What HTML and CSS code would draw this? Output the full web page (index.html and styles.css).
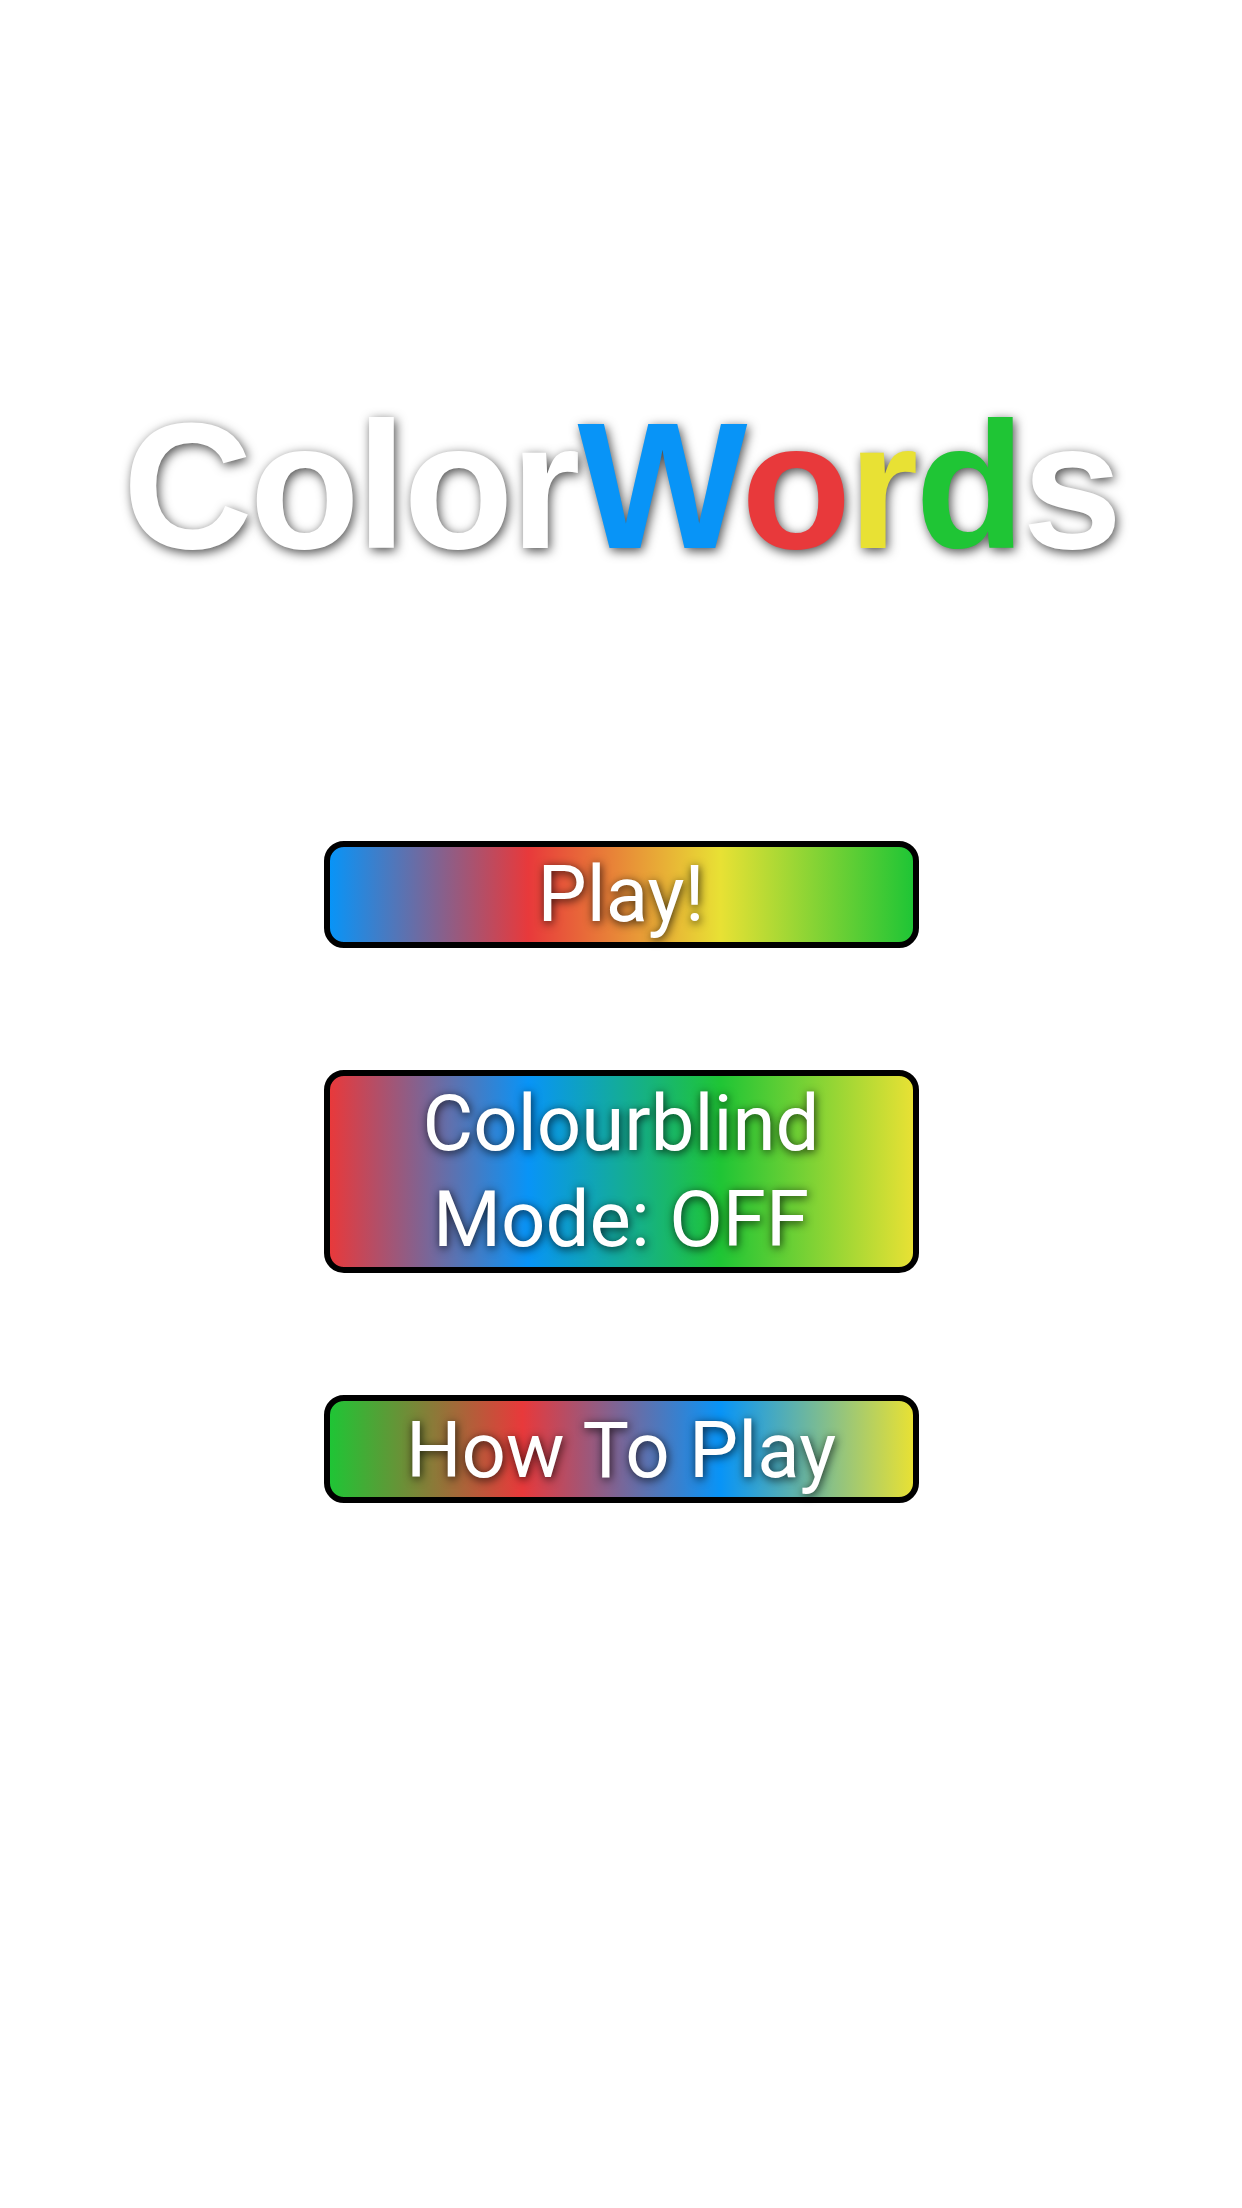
FILE: index.html
```html
<!DOCTYPE html>
<html>
<head>
<meta charset="utf-8">
<link rel="stylesheet" href="styles.css">
</head>
<body>
<main class="screen">
  <h1 class="title"><span class="w">Color</span><span class="c-blue">W</span><span class="c-red">o</span><span class="c-yellow">r</span><span class="c-green">d</span><span class="w">s</span></h1>
  <div class="menu">
    <button class="btn btn-play">Play!</button>
    <button class="btn btn-cb">Colourblind<br>Mode: OFF</button>
    <button class="btn btn-how">How To Play</button>
  </div>
</main>
</body>
</html>
```

FILE: styles.css
```css
html, body {
  margin: 0;
  padding: 0;
  background: #ffffff;
}

.screen {
  width: 1242px;
  height: 2208px;
  display: flex;
  flex-direction: column;
  align-items: center;
}

.title {
  margin: 396px 0 0 0;
  height: 180px;
  font-family: "Liberation Sans", Arial, sans-serif;
  font-weight: 700;
  font-size: 180px;
  line-height: 180px;
  letter-spacing: -3px;
  color: #ffffff;
  text-shadow: 2px 3px 11px rgba(0, 0, 0, 0.7);
  white-space: nowrap;
}

.c-blue { color: #0894f7; }
.c-red { color: #e8393b; }
.c-yellow { color: #e8e134; }
.c-green { color: #1fc535; }

.menu {
  margin-top: 265px;
  display: flex;
  flex-direction: column;
  align-items: center;
  gap: 122px;
}

.btn {
  box-sizing: border-box;
  width: 595px;
  margin: 0;
  padding: 0;
  border: 6px solid #000000;
  border-radius: 20px;
  font-family: Roboto, "Noto Sans", sans-serif;
  font-weight: 400;
  font-size: 78px;
  line-height: 96px;
  color: #ffffff;
  text-align: center;
  text-shadow: 1px 2px 10px rgba(0, 0, 0, 0.8);
}

.btn-play {
  height: 107px;
  line-height: 95px;
  background: linear-gradient(to right, #0894f7 0%, #e8393b 34%, #e8e134 67%, #1fc535 100%);
}

.btn-cb {
  height: 203px;
  background: linear-gradient(to right, #e8393b 0%, #0894f7 34%, #1fc535 67%, #e8e134 100%);
}

.btn-how {
  height: 108px;
  padding-top: 3px;
  line-height: 93px;
  background: linear-gradient(to right, #1fc535 0%, #e8393b 33%, #0894f7 67%, #e8e134 100%);
}
```
